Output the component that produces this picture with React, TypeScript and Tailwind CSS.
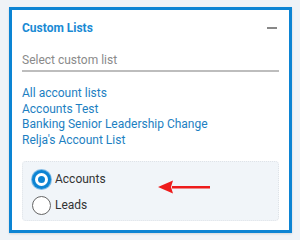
export default function App() {
  const lists = [
    "All account lists",
    "Accounts Test",
    "Banking Senior Leadership Change",
    "Relja's Account List",
  ];
  return (
    <div className="h-[240px] w-[300px] bg-[#eff3f7] pt-[7px] pl-[9px] font-['Roboto',sans-serif]">
      <div className="w-[283px] h-[226px] border-[3px] border-[#0c84d3] bg-white shadow-[0_1px_2px_rgba(0,0,0,0.12)] px-[10px] pt-[8px]">
        <div className="flex items-center justify-between h-[20px]">
          <h2 className="text-[12px] font-bold text-[#1a8ad4]">Custom Lists</h2>
          <div className="w-[10px] h-[1.5px] bg-[#888] mr-[2px]" />
        </div>
        <div className="mt-[14px] border-b-2 border-[#bdbdbd] pb-[2px] text-[12px] text-[#8a8a8a] leading-[16px]">
          Select custom list
        </div>
        <ul className="mt-[14px] flex flex-col text-[12px] leading-[15.5px] text-[#1d7fc2]">
          {lists.map((l) => (
            <li key={l}>{l}</li>
          ))}
        </ul>
        <div className="mt-[13px] h-[60px] rounded-[4px] border border-dotted border-[#dfe3e8] bg-[#f1f5f9] px-[9px] pt-[7px] relative">
          <div className="flex items-center gap-[4px] h-[20px] text-[12px] text-[#333]">
            <span className="w-[19px] h-[19px] rounded-full bg-[#0c84d3] flex items-center justify-center shadow-[0_0_0_1px_#7fbbe6]">
              <span className="w-[13px] h-[13px] rounded-full bg-white flex items-center justify-center">
                <span className="w-[7px] h-[7px] rounded-full bg-[#0c84d3]" />
              </span>
            </span>
            Accounts
          </div>
          <div className="mt-[6px] flex items-center gap-[4px] h-[20px] text-[12px] text-[#333]">
            <span className="w-[19px] h-[19px] rounded-full bg-white border border-[#666]" />
            Leads
          </div>
          <svg className="absolute left-[135px] top-[18px]" width="54" height="14" viewBox="0 0 54 14">
            <path d="M14 6 H52 V8.5 H14 Z" fill="#ee1c1c" />
            <path d="M0 7 L15 0.5 L13 7 L15 13.5 Z" fill="#ee1c1c" />
          </svg>
        </div>
      </div>
    </div>
  );
}
